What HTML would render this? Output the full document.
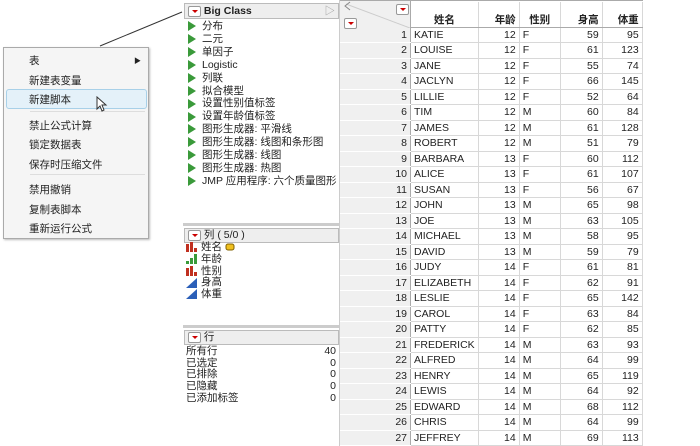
<!DOCTYPE html><html><head><meta charset="utf-8"><style>
body{margin:0;width:700px;height:446px;background:#fff;position:relative;overflow:hidden;font-family:"Liberation Sans","Noto Sans CJK SC",sans-serif;font-size:10.5px;color:#222}
.a{position:absolute;white-space:nowrap}
.tri{display:inline-block;width:0;height:0;border-left:8px solid #3a9a3a;border-top:5px solid transparent;border-bottom:5px solid transparent;vertical-align:middle;margin-right:6px}
.rd{display:inline-block;width:11px;height:9px;border:1px solid #999;background:#fff;border-radius:2px;vertical-align:middle;position:relative;margin-right:3px}
.rd:after{content:"";position:absolute;left:3px;top:3px;border-left:3px solid transparent;border-right:3px solid transparent;border-top:3px solid #c00}
.hdr{background:#eee;border:1px solid #bbb}
.ic{display:inline-block;width:12px;height:10px;vertical-align:middle;margin-right:3px}
table{border-collapse:collapse}
td{height:14.5px;padding:0 3px;border-right:1px solid #d8d8d8;border-bottom:1px solid #d8d8d8;font-size:10.5px}
</style></head><body>
<svg class="a" style="left:0;top:0" width="700" height="446"><line x1="100" y1="46" x2="182" y2="12" stroke="#333" stroke-width="1"/></svg>
<div class="a" style="left:3px;top:47px;width:144px;height:190px;border:1px solid #aaa;background:#f5f5f5;box-shadow:1px 1px 2px #bbb"></div>
<div class="a" style="left:6px;top:89px;width:139px;height:18px;border:1px solid #a8d0e8;border-radius:3px;background:#e4f1f9"></div>
<div class="a" style="left:30px;top:111px;width:115px;height:1px;background:#ddd"></div>
<div class="a" style="left:30px;top:174px;width:115px;height:1px;background:#ddd"></div>
<div class="a" style="left:29px;top:52px;line-height:19.5px">表<br>新建表变量<br>新建脚本<br><div style="height:6px"></div>禁止公式计算<br>锁定数据表<br>保存时压缩文件<br><div style="height:6px"></div>禁用撤销<br>复制表脚本<br>重新运行公式</div>
<div class="a" style="left:134px;top:56px;font-size:7px">▶</div>
<svg class="a" style="left:96px;top:96px" width="12" height="16"><path d="M1 1 L1 13 L4 10 L6 15 L8 14 L6 9 L10 9 Z" fill="#fff" stroke="#333"/></svg>
<div class="a" style="left:183px;top:0;width:156px;height:446px;background:#fff;border-right:1px solid #ccc"></div>
<div class="a hdr" style="left:184px;top:3px;width:153px;height:14px;line-height:14px;font-weight:bold">&nbsp;<span class="rd"></span>Big Class<span style="position:absolute;right:3px;color:#999;font-weight:normal">▷</span></div>
<div class="a" style="left:188px;top:20px;line-height:12.9px">
<div><span class="tri"></span>分布</div><div><span class="tri"></span>二元</div><div><span class="tri"></span>单因子</div><div><span class="tri"></span>Logistic</div><div><span class="tri"></span>列联</div><div><span class="tri"></span>拟合模型</div><div><span class="tri"></span>设置性别值标签</div><div><span class="tri"></span>设置年龄值标签</div><div><span class="tri"></span>图形生成器: 平滑线</div><div><span class="tri"></span>图形生成器: 线图和条形图</div><div><span class="tri"></span>图形生成器: 线图</div><div><span class="tri"></span>图形生成器: 热图</div><div><span class="tri"></span>JMP 应用程序: 六个质量图形</div></div>
<div class="a" style="left:183px;top:223px;width:156px;height:3px;background:#ccc"></div>
<div class="a hdr" style="left:184px;top:228px;width:153px;height:13px;line-height:13px">&nbsp;<span class="rd"></span>列 ( 5/0 )</div>
<div class="a" style="left:186px;top:242px;line-height:11.8px">
<div><svg class="ic"><rect x="0" y="2" width="3" height="8" fill="#c03020"/><rect x="4" y="0" width="3" height="10" fill="#c03020"/><rect x="8" y="6" width="3" height="4" fill="#c03020"/></svg>姓名 <svg width="10" height="8" style="vertical-align:middle"><rect x="1" y="1" width="8" height="6" rx="2" fill="#f0c020" stroke="#806000"/></svg></div>
<div><svg class="ic"><rect x="0" y="7" width="3" height="3" fill="#3a9a3a"/><rect x="4" y="4" width="3" height="6" fill="#3a9a3a"/><rect x="8" y="0" width="3" height="10" fill="#3a9a3a"/></svg>年龄</div>
<div><svg class="ic"><rect x="0" y="2" width="3" height="8" fill="#c03020"/><rect x="4" y="0" width="3" height="10" fill="#c03020"/><rect x="8" y="6" width="3" height="4" fill="#c03020"/></svg>性别</div>
<div><svg class="ic"><path d="M0 10 L11 0 L11 10 Z" fill="#2b5fb8"/></svg>身高</div>
<div><svg class="ic"><path d="M0 10 L11 0 L11 10 Z" fill="#2b5fb8"/></svg>体重</div></div>
<div class="a" style="left:183px;top:325px;width:156px;height:3px;background:#ccc"></div>
<div class="a hdr" style="left:184px;top:330px;width:153px;height:13px;line-height:13px">&nbsp;<span class="rd"></span>行</div>
<div class="a" style="left:186px;top:346px;line-height:11.7px;width:150px">
<div>所有行<span style="float:right">40</span></div><div>已选定<span style="float:right">0</span></div><div>已排除<span style="float:right">0</span></div><div>已隐藏<span style="float:right">0</span></div><div>已添加标签<span style="float:right">0</span></div></div>
<div class="a" style="left:340px;top:0;width:70px;height:446px;background:#f0f0f0;border-right:1px solid #aaa"></div>
<svg class="a" style="left:340px;top:0" width="70" height="28"><line x1="6" y1="4" x2="70" y2="28" stroke="#ccc"/><path d="M10 2 L5 6 L10 10" fill="none" stroke="#888"/></svg>
<div class="a" style="left:396px;top:3px"><span class="rd"></span></div>
<div class="a" style="left:344px;top:17px"><span class="rd"></span></div>
<div class="a" style="left:340px;top:0;width:303px;height:1px;background:#aaa"></div>
<table class="a" style="left:340px;top:2px">
<tr style="height:25px;font-weight:bold"><td style="width:64px;border:none;border-right:1px solid #aaa"></td><td style="width:60px;text-align:center;vertical-align:bottom;border-bottom:1px solid #aaa">姓名</td><td style="width:34px;text-align:right;vertical-align:bottom;border-bottom:1px solid #aaa">年龄</td><td style="width:34px;text-align:center;vertical-align:bottom;border-bottom:1px solid #aaa">性别</td><td style="width:35px;text-align:right;vertical-align:bottom;border-bottom:1px solid #aaa">身高</td><td style="width:33px;text-align:right;vertical-align:bottom;border-bottom:1px solid #aaa">体重</td></tr>
<tbody id="b"></tbody></table>
<script>
var d="KATIE 12 F 59 95,LOUISE 12 F 61 123,JANE 12 F 55 74,JACLYN 12 F 66 145,LILLIE 12 F 52 64,TIM 12 M 60 84,JAMES 12 M 61 128,ROBERT 12 M 51 79,BARBARA 13 F 60 112,ALICE 13 F 61 107,SUSAN 13 F 56 67,JOHN 13 M 65 98,JOE 13 M 63 105,MICHAEL 13 M 58 95,DAVID 13 M 59 79,JUDY 14 F 61 81,ELIZABETH 14 F 62 91,LESLIE 14 F 65 142,CAROL 14 F 63 84,PATTY 14 F 62 85,FREDERICK 14 M 63 93,ALFRED 14 M 64 99,HENRY 14 M 65 119,LEWIS 14 M 64 92,EDWARD 14 M 68 112,CHRIS 14 M 64 99,JEFFREY 14 M 69 113".split(","),h="";
d.forEach(function(r,i){var c=r.split(" ");h+='<tr><td style="text-align:right;border-right:1px solid #aaa;border-bottom:1px solid #fff">'+(i+1)+'</td><td>'+c[0]+'</td><td style="text-align:right">'+c[1]+'</td><td>'+c[2]+'</td><td style="text-align:right">'+c[3]+'</td><td style="text-align:right">'+c[4]+'</td></tr>';});
document.getElementById("b").innerHTML=h;
</script>
</body></html>
